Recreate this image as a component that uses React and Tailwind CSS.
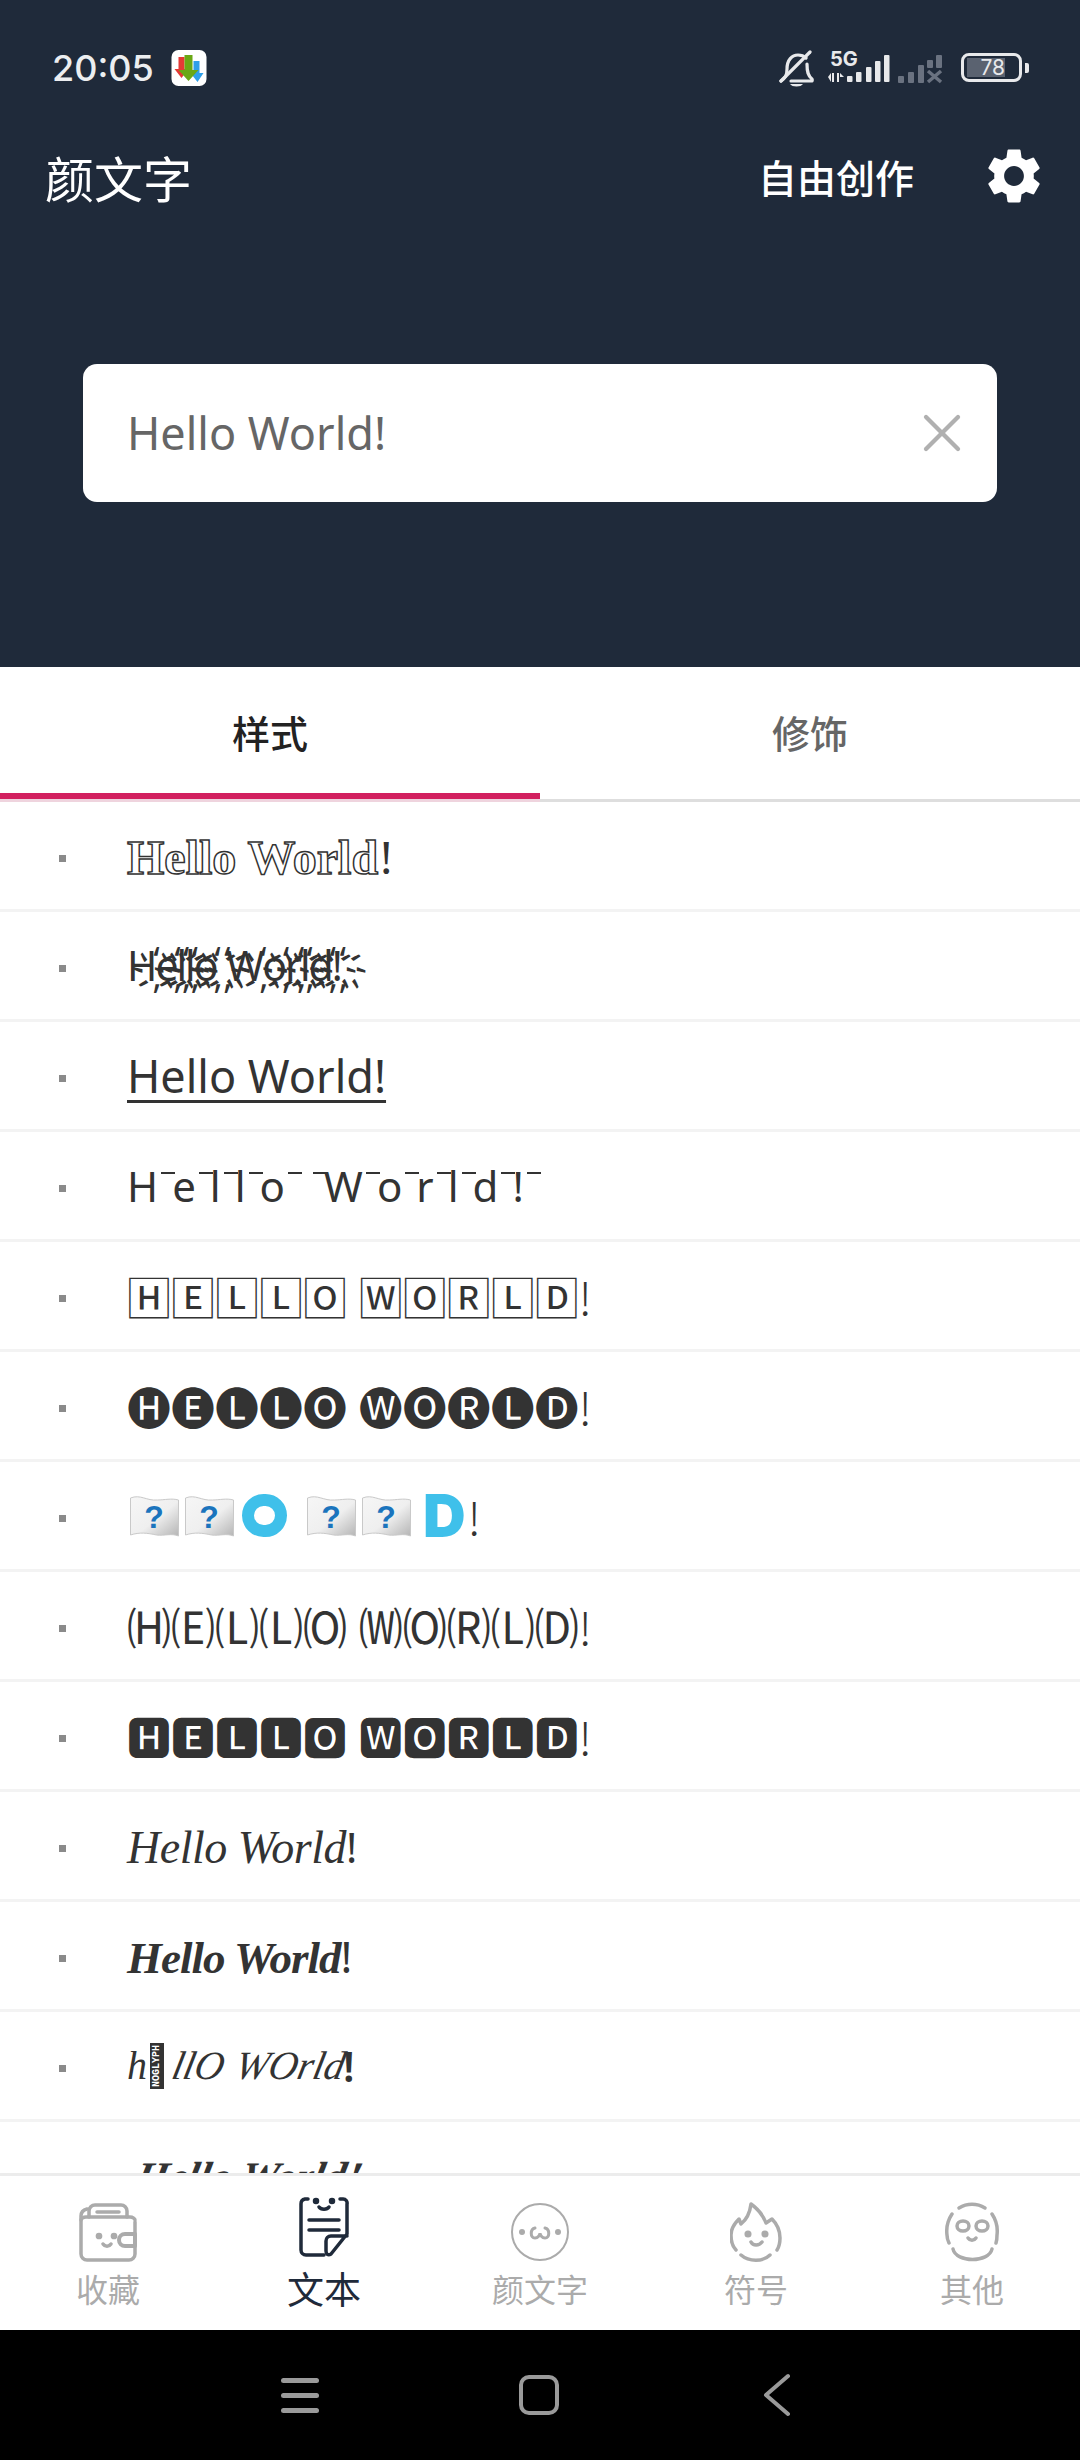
import React from 'react';
import { X } from 'lucide-react';

const Row = ({ children }) => (
  <div className="relative h-[110px] border-b-[3px] border-[#f3f3f3] pl-[127px] flex items-center text-[#333333] text-[44px] leading-none whitespace-nowrap overflow-hidden shrink-0">
    <span className="absolute left-[59px] top-[53px] w-[7px] h-[7px] bg-[#8a8a8a]" />
    {children}
  </div>
);

const zalgo = 'Hello World!'.split('').map((c) => c + '\u0489').join('');

const Enclosed = ({ text }) => (
  <span className="font-['Noto_Sans_CJK_SC',sans-serif] text-[44px] leading-none [word-spacing:2px]">
    {text}
    <span className="font-light">!</span>
  </span>
);

const Overbar = () => (
  <span className="flex items-start font-['Noto_Sans',sans-serif] text-[42px] leading-none tracking-[14px]">
    {'Hello World!'.split('').map((c, i) => (
      <span key={i} className="relative whitespace-pre">
        {c}
        <span className="absolute right-[-3px] top-[7px] w-[14px] h-[2px] bg-[#333333]" />
      </span>
    ))}
  </span>
);

const Flag = () => (
  <svg width="49" height="42" viewBox="0 0 49 42">
    <defs>
      <linearGradient id="flagShade" x1="0" y1="0" x2="1" y2="1">
        <stop offset="0" stopColor="#f6f6f6" />
        <stop offset="0.55" stopColor="#efefef" />
        <stop offset="1" stopColor="#b5b5b5" />
      </linearGradient>
    </defs>
    <path d="M.5 3c10-4 16 3 27 2 7 0 14-2 21 0v36c-7-3-14 0-22-1-9-2-17-3-26 0z" fill="url(#flagShade)" stroke="#c9c9c9" strokeWidth="1" />
    <text x="24" y="33" textAnchor="middle" fontSize="32" fontWeight="700" fill="#1a74bd" fontFamily="Liberation Sans, sans-serif">?</text>
  </svg>
);

const FavIcon = ({ c }) => (
  <svg width="58" height="60" viewBox="0 0 58 60" fill="none" stroke={c} strokeWidth="3.5" strokeLinecap="round" strokeLinejoin="round">
    <path d="M56 20V52a6 6 0 0 1-6 6H8a6 6 0 0 1-6-6V14C2 10 4 8 8 7" />
    <path d="M2 18c0-1 2-3 5-3h44c3 0 5 2 5 3" />
    <path d="M10 15V9a6 6 0 0 1 6-6h26a6 6 0 0 1 6 6v6" />
    <path d="M18 10h22" />
    <path d="M56 32H46a6 6 0 0 0 0 12h10z" strokeWidth="4" />
    <circle cx="20" cy="34" r="1.6" fill={c} />
    <circle cx="35" cy="34" r="1.6" fill={c} />
    <path d="M24 42c2 3 6 3 8 0" />
  </svg>
);

const NoteIcon = ({ c }) => (
  <svg width="50" height="60" viewBox="0 0 50 60" fill="none" stroke={c} strokeWidth="3.5" strokeLinecap="round" strokeLinejoin="round">
    <path d="M9 2H6a5 5 0 0 0-4 5v46a5 5 0 0 0 5 5h18" />
    <path d="M41 2h3a4 4 0 0 1 4 5v30L32 57c-3 2-5 0-5-3V44c0-3 2-5 5-5h16" />
    <path d="M10 23h30M10 33h30" />
    <circle cx="17" cy="4" r="1.5" fill={c} />
    <circle cx="33" cy="4" r="1.5" fill={c} />
    <path d="M20 10c2 3 8 3 10 0" />
  </svg>
);

const FaceIcon = ({ c }) => (
  <svg width="58" height="60" viewBox="0 0 58 60" fill="none" stroke={c} strokeWidth="2" strokeLinecap="round">
    <circle cx="29" cy="30" r="28" />
    <circle cx="11" cy="30" r="3" fill={c} stroke="none" />
    <circle cx="47" cy="30" r="3" fill={c} stroke="none" />
    <path d="M24 26c-5 1-5 10 0 10 3 0 5-3 5-5 0 2 2 5 5 5 5 0 5-9 0-10" strokeWidth="3" />
  </svg>
);

const FlameIcon = ({ c }) => (
  <svg width="52" height="60" viewBox="0 0 52 60" fill="none" stroke={c} strokeWidth="3.5" strokeLinecap="round" strokeLinejoin="round">
    <path d="M6 48C2 44 1 38 1 33c0-6 3-11 8-16l2 5c5-4 9-12 10-20 7 5 12 11 15 19l6-4c5 5 8 12 8 19 0 5-1 9-3 12" />
    <path d="M11 53c8 7 22 7 29 0" />
    <circle cx="18" cy="32" r="1.8" fill={c} />
    <circle cx="35" cy="32" r="1.8" fill={c} />
    <path d="M21 40c2 4 8 4 11 0" />
  </svg>
);

const SlothIcon = ({ c }) => (
  <svg width="54" height="60" viewBox="0 0 54 60" fill="none" stroke={c} strokeWidth="3.5" strokeLinecap="round" strokeLinejoin="round">
    <path d="M14 6c8-5 18-5 26 0" />
    <path d="M7 12C3 18 1 25 2 33c0 3 1 6 2 8" />
    <path d="M47 12c4 6 6 13 5 21 0 3 0 5-1 8" />
    <path d="M8 47c3 14 36 14 39 0" />
    <ellipse cx="18" cy="24" rx="6" ry="5" />
    <ellipse cx="37" cy="24" rx="6" ry="5" />
    <path d="M23 36c2 3 6 3 8 0" />
  </svg>
);

const tabs = [
  { label: '收藏', Icon: FavIcon },
  { label: '文本', Icon: NoteIcon, active: true },
  { label: '颜文字', Icon: FaceIcon },
  { label: '符号', Icon: FlameIcon },
  { label: '其他', Icon: SlothIcon },
];

export default function App() {
  return (
    <div className="w-[1080px] h-[2460px] flex flex-col bg-white overflow-hidden font-['Noto_Sans_CJK_SC','Noto_Sans',sans-serif]">
      <header className="h-[667px] bg-[#1f2a3a] text-white flex flex-col shrink-0">
        <div className="h-[87px] mt-[50px] pl-[52px] pr-[51px] flex items-start">
          <div className="flex items-center gap-[17px]">
            <span className="text-[36px] leading-none font-['Inter',sans-serif] font-medium text-[#eceef0]">20:05</span>
            <svg width="36" height="36" viewBox="0 0 35 36">
              <rect width="35" height="36" rx="7" fill="#fff" />
              <path d="M7 7h6v12h4l-7 9-7-9h4z" fill="#e53935" />
              <path d="M22 11h6v12h4l-6 9-7-9h3z" fill="#2f9fe8" />
              <path d="M13 5h8v15h6l-10 11L7 20h6z" fill="#6aa815" />
            </svg>
          </div>
          <svg width="170" height="40" viewBox="0 0 170 40" fill="none" className="ml-auto">
            <g stroke="#e8e9eb" strokeWidth="3.2" strokeLinecap="round" strokeLinejoin="round">
              <path d="M2 31c4-3 6-5 6-12C8 10 13 5 19 5c3 0 6 1 8 3" />
              <path d="M28 14c0 8 1 12 5 15 1 2 0 2-1 2H12" />
              <path d="M2 31L31 2" />
            </g>
            <path d="M11 34h13a7 4 0 0 1-13 0z" fill="#e8e9eb" />
            <text x="51" y="16" fontSize="20" fontWeight="700" fill="#e8e9eb" fontFamily="Inter, sans-serif">5G</text>
            <path d="M49 27l3-4v9zM53 23h2v9h-2zM58 23h2v9h-2zM61 23l4 4h-4z" fill="#e8e9eb" />
            <g fill="#e8e9eb">
              <rect x="68" y="26" width="5.5" height="6" rx="1" />
              <rect x="77" y="22" width="5.5" height="10" rx="1" />
              <rect x="87" y="17" width="5.5" height="15" rx="1" />
              <rect x="96" y="11" width="5.5" height="21" rx="1" />
              <rect x="105" y="5" width="5.5" height="27" rx="1" />
            </g>
            <g fill="#6a7280">
              <rect x="119" y="26" width="6" height="7" rx="1" />
              <rect x="129" y="22" width="6" height="11" rx="1" />
              <rect x="139" y="15" width="6" height="18" rx="1" />
              <rect x="148" y="10" width="6" height="8" rx="1" />
              <rect x="157" y="5" width="6" height="13" rx="1" />
            </g>
            <path d="M149 21l13 11M162 21l-13 11" stroke="#6a7280" strokeWidth="3.5" />
          </svg>
          <div className="ml-[12px] flex items-center mt-[3px]">
            <div className="w-[61px] h-[29px] border-[3px] border-[#e8e9eb] rounded-[8px] flex items-center pl-[3px]">
              <div className="w-[38px] h-[19px] bg-[#5a6270] flex items-center justify-end text-[21px] leading-none text-[#e8e9eb] font-['Inter',sans-serif]">78</div>
            </div>
            <span className="ml-[3px] w-[4px] h-[10px] bg-[#e8e9eb] rounded-r-[2px]" />
          </div>
        </div>

        <div className="mt-[6px] h-[66px] flex items-center pl-[45px] pr-[33px]">
          <span className="text-[49px] leading-none">颜文字</span>
          <span className="ml-auto text-[39px] leading-none font-medium">自由创作</span>
          <svg width="66" height="66" viewBox="0 0 24 24" fill="#fff" className="ml-[67px]">
            <path d="M19.14 12.94c.04-.3.06-.61.06-.94 0-.32-.02-.64-.07-.94l2.03-1.58c.18-.14.23-.41.12-.61l-1.92-3.32c-.12-.22-.37-.29-.59-.22l-2.39.96c-.5-.38-1.03-.7-1.62-.94l-.36-2.54c-.04-.24-.24-.41-.48-.41h-3.84c-.24 0-.43.17-.47.41l-.36 2.54c-.59.24-1.13.57-1.62.94l-2.39-.96c-.22-.08-.47 0-.59.22L2.74 8.87c-.12.21-.08.47.12.61l2.03 1.58c-.05.3-.09.63-.09.94s.02.64.07.94l-2.03 1.58c-.18.14-.23.41-.12.61l1.92 3.32c.12.22.37.29.59.22l2.39-.96c.5.38 1.03.7 1.62.94l.36 2.54c.05.24.24.41.48.41h3.84c.24 0 .44-.17.47-.41l.36-2.54c.59-.24 1.13-.56 1.62-.94l2.39.96c.22.08.47 0 .59-.22l1.92-3.32c.12-.22.07-.47-.12-.61l-2.01-1.58zM12 15.6c-1.98 0-3.6-1.62-3.6-3.6s1.62-3.6 3.6-3.6 3.6 1.62 3.6 3.6-1.62 3.6-3.6 3.6z" />
          </svg>
        </div>

        <div className="mt-[155px] mx-[83px] h-[138px] bg-white rounded-[14px] flex items-center pl-[44px] pr-[23px]">
          <span className="text-[45px] text-[#666666] font-['Noto_Sans',sans-serif]">Hello World!</span>
          <X size={64} strokeWidth={1.6} className="ml-auto text-[#b0b0b0]" />
        </div>
      </header>

      <nav className="h-[135px] flex shrink-0 text-[38px] font-medium border-b-[3px] border-[#dedede]">
        <div className="flex-1 flex items-center justify-center pb-[3px] text-[#222222] relative">
          样式
          <span className="absolute left-0 right-0 bottom-0 h-[6px] bg-[#d2205f]" />
          <span className="absolute left-0 right-0 bottom-[-3px] h-[3px] bg-[#efd4de]" />
        </div>
        <div className="flex-1 flex items-center justify-center pb-[3px] text-[#666666]">修饰</div>
      </nav>

      <main className="flex-1 overflow-hidden flex flex-col">
        <Row>
          <span className="pt-[4px] font-['Liberation_Serif',serif] font-bold text-white [-webkit-text-stroke:1.5px_#333333] text-[48px]">Hello World<span className="text-[#333333] font-normal [-webkit-text-stroke:0]">!</span></span>
        </Row>
        <Row>
          <span className="font-['Noto_Sans','DejaVu_Sans',sans-serif] text-[41px] tracking-[-1px]">{zalgo}</span>
        </Row>
        <Row>
          <span className="font-['Noto_Sans',sans-serif] text-[45px] underline underline-offset-[7px] decoration-[3px]">Hello World!</span>
        </Row>
        <Row>
          <Overbar />
        </Row>
        <Row>
          <Enclosed text="🄷🄴🄻🄻🄾 🅆🄾🅁🄻🄳" />
        </Row>
        <Row>
          <Enclosed text="🅗🅔🅛🅛🅞 🅦🅞🅡🅛🅓" />
        </Row>
        <Row>
          <div className="flex items-center ml-[3px] gap-[6px]">
            <Flag />
            <Flag />
            <span className="ml-[2px] mr-[14px] w-[45px] h-[43px] rounded-full border-[12px] border-[#3fc0ea]" />
            <Flag />
            <Flag />
            <span className="ml-[6px] font-['Inter',sans-serif] font-black text-[59px] leading-none text-[#3fc0ea]">D</span>
            <span className="font-['Noto_Sans_CJK_SC',sans-serif] font-light text-[44px] ml-[-4px]">!</span>
          </div>
        </Row>
        <Row>
          <Enclosed text="🄗🄔🄛🄛🄞 🄦🄞🄡🄛🄓" />
        </Row>
        <Row>
          <Enclosed text="🅷🅴🅻🅻🅾 🆆🅾🆁🅻🅳" />
        </Row>
        <Row>
          <span className="pt-[4px] font-['Liberation_Serif',serif] italic text-[46px] tracking-[-0.5px]">Hello World<span className="not-italic font-['Noto_Sans',sans-serif] text-[42px]">!</span></span>
        </Row>
        <Row>
          <span className="pt-[4px] font-['Liberation_Serif',serif] italic font-bold text-[45px] tracking-[-1px]">Hello World<span className="not-italic font-normal font-['Noto_Sans',sans-serif] text-[44px]">!</span></span>
        </Row>
        <Row>
          <span className="flex items-center font-['Liberation_Serif',serif] italic text-[40px]">
            h
            <span className="not-italic w-[14px] h-[46px] bg-[#333333] text-white text-[10px] font-bold font-['Liberation_Mono',monospace] leading-[14px] flex items-center justify-center mx-[3px] overflow-hidden">
              <span className="-rotate-90 whitespace-nowrap">NOGLYPH</span>
            </span>
            <span className="inline-block -skew-x-12 ml-[6px]">llO</span>
            <span className="inline-block -skew-x-12 ml-[12px]">WOrld</span>
            <span className="not-italic font-['Noto_Sans',sans-serif] text-[42px] font-semibold ml-[-2px]">!</span>
          </span>
        </Row>
        <div className="h-[51px] overflow-hidden pl-[136px] text-[#333333] font-['Liberation_Serif',serif] italic font-bold text-[42px] leading-none shrink-0 pt-[34px]">
          <span className="inline-block -skew-x-12">Hello World!</span>
        </div>
      </main>

      <footer className="h-[157px] border-t-[3px] border-[#ececec] bg-white flex shrink-0">
        {tabs.map(({ label, Icon, active }) => {
          const c = active ? '#1f2a3a' : '#ababab';
          return (
            <div key={label} className="flex-1 flex flex-col items-center">
              <div className={active ? 'h-[60px] mt-[21px] flex items-center' : 'h-[60px] mt-[26px] flex items-center'}>
                <Icon c={c} />
              </div>
              <span className={active ? 'mt-[13px] text-[37px] leading-none text-[#1f2a3a]' : 'mt-[10px] text-[32px] leading-none text-[#ababab]'}>{label}</span>
            </div>
          );
        })}
      </footer>

      <div className="h-[130px] bg-black flex items-center pl-[281px] shrink-0">
        <div className="flex flex-col gap-[10px]">
          <span className="w-[38px] h-[5px] bg-[#9a9a9a] rounded-full" />
          <span className="w-[38px] h-[5px] bg-[#9a9a9a] rounded-full" />
          <span className="w-[38px] h-[5px] bg-[#9a9a9a] rounded-full" />
        </div>
        <span className="ml-[200px] w-[40px] h-[40px] border-[4px] border-[#9a9a9a] rounded-[10px]" />
        <svg width="28" height="44" viewBox="0 0 28 44" fill="none" className="ml-[203px]">
          <path d="M26 3L4 22l22 19" stroke="#9a9a9a" strokeWidth="4" strokeLinecap="round" strokeLinejoin="round" />
        </svg>
      </div>
    </div>
  );
}
